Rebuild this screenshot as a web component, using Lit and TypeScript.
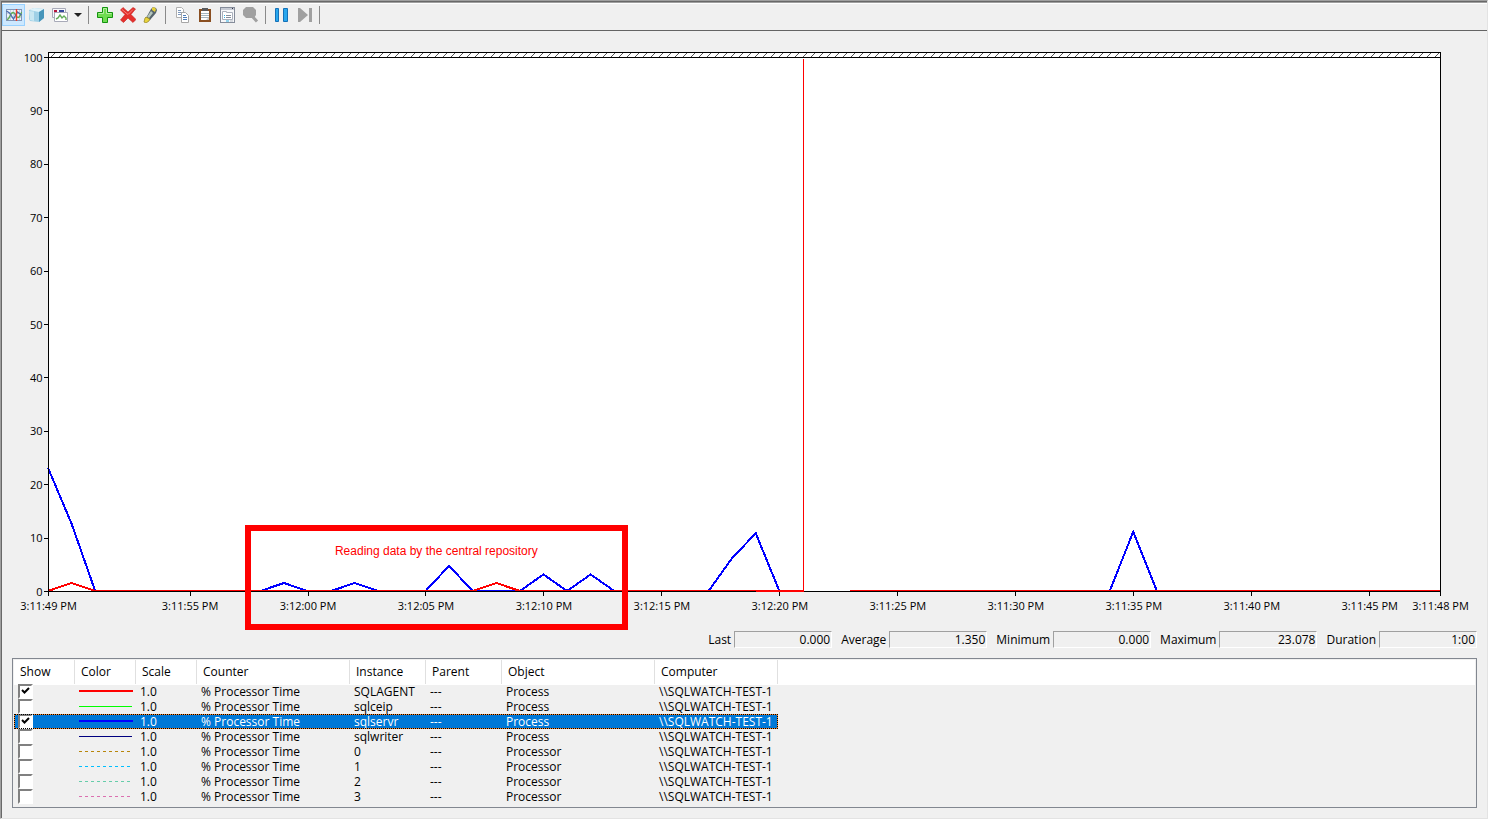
import { LitElement, html, svg, css } from "lit";
import { customElement } from "lit/decorators.js";
import { classMap } from "lit/directives/class-map.js";

const SPAN = 59;
const CURSOR = 32;

interface Counter {
  show: boolean;
  color: string;
  width: number;
  dashed: boolean;
  instance: string;
  object: string;
  selected?: boolean;
}

const counters: Counter[] = [
  { show: true, color: "#ff0000", width: 2, dashed: false, instance: "SQLAGENT", object: "Process" },
  { show: false, color: "#00ff00", width: 1, dashed: false, instance: "sqlceip", object: "Process" },
  { show: true, color: "#0000ff", width: 2, dashed: false, instance: "sqlservr", object: "Process", selected: true },
  { show: false, color: "#000080", width: 1, dashed: false, instance: "sqlwriter", object: "Process" },
  { show: false, color: "#b8860b", width: 1, dashed: true, instance: "0", object: "Processor" },
  { show: false, color: "#00bfff", width: 1, dashed: true, instance: "1", object: "Processor" },
  { show: false, color: "#66cdaa", width: 1, dashed: true, instance: "2", object: "Processor" },
  { show: false, color: "#db70b0", width: 1, dashed: true, instance: "3", object: "Processor" },
];

const timeTicks: [number, string][] = [
  [0, "3:11:49 PM"],
  [6, "3:11:55 PM"],
  [11, "3:12:00 PM"],
  [16, "3:12:05 PM"],
  [21, "3:12:10 PM"],
  [26, "3:12:15 PM"],
  [31, "3:12:20 PM"],
  [36, "3:11:25 PM"],
  [41, "3:11:30 PM"],
  [46, "3:11:35 PM"],
  [51, "3:11:40 PM"],
  [56, "3:11:45 PM"],
  [59, "3:11:48 PM"],
];

const blueRuns = [
  "0,23.078 1,12.6 2,0",
  "9,0 10,1.5 11,0",
  "12,0 13,1.5 14,0",
  "16,0 17,4.7 18,0 20,0 21,3.1 22,0 23,3.1 24,0",
  "28,0 29,6.2 30,10.8 31,0",
  "45,0 46,11.1 47,0",
];
const redRuns = ["0,0 1,1.5 2,0 18,0", "18,0 19,1.5 20,0", "20,0 32,0", "34,0 59,0"];

const toPoints = (run: string) =>
  run
    .split(" ")
    .map((p) => {
      const [x, y] = p.split(",").map(Number);
      return `${x},${100 - y}`;
    })
    .join(" ");

const pct = (index: number) => `${(index / SPAN) * 100}%`;

@customElement("perf-toolbar")
class PerfToolbar extends LitElement {
  static styles = css`
    :host {
      display: flex;
      align-items: center;
      height: 26px;
      padding-bottom: 2px;
      border-bottom: 1px solid #646464;
      box-shadow: inset 0 1px #a0a0a0, inset 0 2px #fff;
    }
    button {
      display: grid;
      place-items: center;
      width: 23px;
      height: 22px;
      padding: 0;
      border: 1px solid transparent;
      background: none;
    }
    .on {
      background: #cce8ff;
      border-color: #99d1ff;
    }
    .drop {
      width: 14px;
    }
    .sep {
      width: 1px;
      height: 18px;
      margin: 0 4px 0 3px;
      background: #8a8a8a;
    }
    svg {
      display: block;
    }
  `;

  private icon(body: unknown) {
    return html`<svg width="17" height="16" viewBox="0 0 17 16" aria-hidden="true">${body}</svg>`;
  }

  render() {
    return html`
      <button class="on" aria-label="View current activity">
        ${this.icon(svg`
          <rect x="1.5" y="2.5" width="15" height="11" fill="#eef4fa" stroke="#8295b8"/>
          <path d="M2 6.500h14M2 10.500h14M5.500 3v10M8.500 3v10M14.500 3v10" stroke="#c4d3e4"/>
          <path d="M2 12.500c3 0 3-7 6-7s2 5 5 5 2-5 4-5" fill="none" stroke="#62ad55" stroke-width="1.5"/>
          <path d="M1.500 4l3 2 4 6 4-7 4 3" fill="none" stroke="#4a6cb0" stroke-width="1.3"/>
          <path d="M11.500 2v12" stroke="#ef3b24" stroke-width="1.4"/>`)}
      </button>
      <button aria-label="View log data">
        ${this.icon(svg`
          <path d="M1 3l5-2 10 1v9l-5 4-9-1-1-2z" fill="#9fd0e6"/>
          <path d="M1 3l5-2 10 1-5 3z" fill="#dff3fa"/>
          <path d="M11 5l5-3v9l-5 4z" fill="#4795ba"/>
          <path d="M1 4l5 .5V14l-4-1z" fill="#c9e7f2"/>`)}
      </button>
      <button aria-label="Change graph type">
        ${this.icon(svg`
          <path d="M1.500 1.500h13v9h-13z" fill="#f7f8fb" stroke="#a8aab8"/>
          <path d="M3 3h3v3H3z" fill="#b8143c"/>
          <path d="M8 4h5" stroke="#33479d" stroke-width="2"/>
          <path d="M3.500 5.500h13v9h-13z" fill="#fff" stroke="#a8aab8"/>
          <path d="M5 12l2-1 2-3 2 3 2-2 2 2v2" fill="none" stroke="#62ac59" stroke-width="1.400"/>`)}
      </button>
      <button class="drop" aria-label="Graph type menu">
        <svg width="8" height="4" viewBox="0 0 8 4"><path d="M0 0h8L4 4z" fill="#222"/></svg>
      </button>
      <span class="sep"></span>
      <button aria-label="Add">
        ${this.icon(svg`
          <path d="M6.500 .5h5v5h5v5h-5v5h-5v-5h-5v-5h5z" fill="#6fdc52" stroke="#13930e"/>
          <path d="M7.500 1.500h3v5h5M2.500 6.500h5v-5" fill="none" stroke="#b4f0a2"/>`)}
      </button>
      <button aria-label="Delete">
        ${this.icon(svg`
          <path d="M1.500 3l2.500-2.500L9 5l5-4.500L16.500 2 12 7.500l5 5-3 3-5-4.500-4.500 4.500-3-2.500L6 7.500z" fill="#e5302c" stroke="#c3201f" stroke-width=".6"/>
          <path d="M3 2.500l6 5 5-5" fill="none" stroke="#f7807a"/>`)}
      </button>
      <button aria-label="Highlight">
        ${this.icon(svg`
          <path d="M9 2l2-2 3 1 1 2-1 3-6 7-4-2z" fill="#56646c"/>
          <path d="M10 1l2-1 2 2-1 3-3-2z" fill="#e6cf38"/>
          <path d="M9 4l2 2-4 5-2-1z" fill="#b4c6bb"/>
          <path d="M4 10l4 2-1 2-3 2-2-1 1-4z" fill="#e8d33c" stroke="#8c7c20" stroke-width=".7"/>`)}
      </button>
      <span class="sep"></span>
      <button aria-label="Copy properties">
        ${this.icon(svg`
          <path d="M3.500 .5h5l2 2v8h-7z" fill="#fff" stroke="#b0b0b0"/>
          <path d="M5 3.500h3M5 5.500h4M5 7.500h3" stroke="#7d98bd"/>
          <path d="M8.500 5.500h4l3 3v7h-7z" fill="#fff" stroke="#a6a6a6"/>
          <path d="M10 8.500h3M10 10.500h4M10 12.500h4" stroke="#4f7db8"/>`)}
      </button>
      <button aria-label="Paste counter list">
        ${this.icon(svg`
          <rect x="4" y="3" width="10" height="11" fill="#fff" stroke="#8a4f21" stroke-width="2"/>
          <path d="M6 1h6v3H6z" fill="#58595c"/>
          <path d="M5 6.500h8M5 8.500h8M5 10.500h8" stroke="#a3b5bf"/>
          <path d="M13 10v3h-3z" fill="#c8c8c8"/>`)}
      </button>
      <button aria-label="Properties">
        ${this.icon(svg`
          <rect x="1.500" y=".5" width="14" height="15" fill="#f7f8fa" stroke="#858c9a"/>
          <path d="M2 2h13" stroke="#c7cbd4" stroke-width="2"/>
          <path d="M13 1.500h1" stroke="#334"/>
          <path d="M3.500 4.500h4v1h6v7h-10z" fill="#fff" stroke="#aab0bc"/>
          <path d="M7 8.500h5M7 10.500h5" stroke="#868e9c"/>
          <path d="M5 8.500h1M5 10.500h1M7 14h3" stroke="#2faee0"/>
          <path d="M11 14h3" stroke="#b6bcc5"/>`)}
      </button>
      <button aria-label="Zoom">
        ${this.icon(svg`
          <path d="M4 0h7l3 3v5l-2 3H4L1 8V3z" fill="#a0a0a0"/>
          <path d="M10 9l5 5.500" stroke="#a0a0a0" stroke-width="3"/>`)}
      </button>
      <span class="sep"></span>
      <button aria-label="Freeze display">
        ${this.icon(svg`
          <path d="M2.500 1.500h3v13h-3zM10.500 1.500h4v13h-4z" fill="#29a7ed" stroke="#1571b8"/>`)}
      </button>
      <button aria-label="Update data">
        ${this.icon(svg`
          <path d="M2 1h2l8 7-8 7H2zM13 1h3v14h-3z" fill="#a0a0a0"/>`)}
      </button>
      <span class="sep"></span>
    `;
  }
}

@customElement("perf-chart")
class PerfChart extends LitElement {
  static styles = css`
    :host {
      display: flex;
      padding: 21px 47px 40px 46px;
      min-height: 0;
    }
    svg {
      display: block;
      overflow: visible;
    }
    .area {
      flex: 1;
      display: flex;
      flex-direction: column;
    }
    .hatch {
      flex: none;
      width: calc(100% + 1px);
      height: 5px;
      overflow: hidden;
    }
    .stage {
      flex: 1;
      display: grid;
      min-height: 0;
      position: relative;
    }
    .stage > svg {
      width: 100%;
      height: 100%;
    }
    text {
      font: 11px/15px "Open Sans", sans-serif;
      fill: #000;
    }
    .axis {
      stroke: #000;
      shape-rendering: crispEdges;
    }
    .cursor {
      stroke: #ff0000;
      shape-rendering: crispEdges;
    }
    .run {
      fill: none;
      stroke-width: 2;
      vector-effect: non-scaling-stroke;
      shape-rendering: crispEdges;
    }
    .blue {
      stroke: #0000ff;
    }
    .red {
      stroke: #ff0000;
    }
    .note {
      position: absolute;
      box-sizing: border-box;
      left: 14.15%;
      width: 27.5%;
      bottom: -39px;
      height: 105px;
      border: 6px solid #ff0000;
      padding-top: 12px;
      text-align: center;
      color: #ff0000;
      font: 12px/17px "Liberation Sans", sans-serif;
    }
  `;

  render() {
    const values = Array.from({ length: 11 }, (_, i) => i * 10);
    return html`
      <div class="area">
        <svg class="hatch" aria-hidden="true">
          <defs>
            <pattern id="hatch" width="8" height="5" patternUnits="userSpaceOnUse">
              <path d="M3 5l4-4" stroke="#555" />
            </pattern>
          </defs>
          <rect width="100%" height="5" fill="#fff" />
          <rect width="100%" height="5" fill="url(#hatch)" />
          <path d="M0 .5h4000M.5 0v5" stroke="#000" />
          <line x1="100%" x2="100%" y2="5" stroke="#000" stroke-width="2" />
        </svg>
        <div class="stage">
          <svg role="img" aria-label="% Processor Time">
            <rect width="100%" height="100%" fill="#fff" />
            <svg x="0" y="0" width="100%" height="100%" viewBox="0 0 ${SPAN} 100" preserveAspectRatio="none">
              ${blueRuns.map((r) => svg`<polyline class="run blue" points=${toPoints(r)}/>`)}
              ${redRuns.map((r) => svg`<polyline class="run red" points=${toPoints(r)}/>`)}
            </svg>
            <g transform="translate(.5 .5)">
              <rect class="axis" width="100%" height="100%" fill="none" />
              ${values.map(
                (v) => svg`
                  <line class="axis" x1="-5" x2="0" y1="${100 - v}%" y2="${100 - v}%"/>
                  <text x="-6" y="${100 - v}%" dy="4" text-anchor="end">${v}</text>`
              )}
              ${timeTicks.map(
                ([i, label]) => svg`
                  <svg y="100%" height="20" overflow="visible">
                    <line class="axis" x1=${pct(i)} x2=${pct(i)} y2="4"/>
                    <text x=${pct(i)} y="18" text-anchor="middle">${label}</text>
                  </svg>`
              )}
              <line class="cursor" x1=${pct(CURSOR)} x2=${pct(CURSOR)} y1="1" y2="100%" />
              <line class="cursor" x1=${pct(30)} x2=${pct(CURSOR)} y1="100%" y2="100%" />
            </g>
          </svg>
          <div class="note">Reading data by the central repository</div>
        </div>
      </div>
    `;
  }
}

@customElement("perf-stats")
class PerfStats extends LitElement {
  static styles = css`
    :host {
      display: flex;
      justify-content: flex-end;
      align-items: center;
      gap: 9px;
      padding: 0 10px 0 0;
      font: 12px/16px "Open Sans", sans-serif;
    }
    .stat {
      display: flex;
      align-items: center;
      gap: 3px;
    }
    output {
      box-sizing: border-box;
      width: 98px;
      height: 17px;
      padding-right: 1px;
      border: 1px solid;
      border-color: #a0a0a0 #fff #fff #a0a0a0;
      text-align: right;
      line-height: 15px;
    }
  `;

  render() {
    const stats = [
      ["Last", "0.000"],
      ["Average", "1.350"],
      ["Minimum", "0.000"],
      ["Maximum", "23.078"],
      ["Duration", "1:00"],
    ];
    return html`${stats.map(
      ([name, value]) => html`<div class="stat">
        <label for=${name}>${name}</label><output id=${name}>${value}</output>
      </div>`
    )}`;
  }
}

@customElement("perf-legend")
class PerfLegend extends LitElement {
  static styles = css`
    :host {
      display: block;
      border: 1px solid #828790;
      padding: 1px;
      font: 12px/15px "Open Sans", sans-serif;
    }
    table {
      table-layout: fixed;
      width: 764px;
      border-collapse: separate;
      border-spacing: 0;
    }
    th {
      box-sizing: border-box;
      height: 24px;
      padding: 0 6px 1px;
      text-align: left;
      font-weight: 400;
      border-right: 1px solid #e0e0e0;
    }
    td {
      height: 15px;
      padding: 0 4px;
      white-space: nowrap;
      line-height: 15px;
    }
    .list {
      background: linear-gradient(#fff 25px, transparent 25px);
      padding-bottom: 2px;
    }
    .c-show { width: 61px; }
    .c-color { width: 61px; }
    .c-scale { width: 61px; }
    .c-counter { width: 153px; }
    .c-instance { width: 76px; }
    .c-parent { width: 76px; }
    .c-object { width: 153px; }
    .c-computer { width: 123px; }
    .selected {
      background: #0078d7;
      color: #fff;
      box-shadow: inset 0 0 0 1px #ff8728;
      outline: 1px dotted #000;
      outline-offset: -1px;
    }
    .tick {
      display: flex;
    }
    input {
      appearance: none;
      box-sizing: border-box;
      width: 15px;
      height: 15px;
      margin: 0;
      border: 2px solid;
      border-color: #808080 #fff #fff #808080;
      background: #fff;
    }
    input:checked {
      background: #fff
        url("data:image/svg+xml,%3Csvg xmlns='http://www.w3.org/2000/svg' width='11' height='11'%3E%3Cpath d='M2 4l2.500 2.500L9 2' fill='none' stroke='%23000' stroke-width='2'/%3E%3C/svg%3E")
        no-repeat;
    }
    svg {
      display: block;
    }
  `;

  render() {
    const cols = ["Show", "Color", "Scale", "Counter", "Instance", "Parent", "Object", "Computer"];
    return html`
      <div class="list">
        <table>
          <colgroup>
            ${cols.map((c) => html`<col class="c-${c.toLowerCase()}" />`)}
          </colgroup>
          <thead>
            <tr>
              ${cols.map((c) => html`<th scope="col">${c}</th>`)}
            </tr>
          </thead>
          <tbody>
            ${counters.map(
              (c) => html`<tr class=${classMap({ selected: !!c.selected })}>
                <td class="tick"><input type="checkbox" aria-label="Show ${c.instance}" .checked=${c.show} /></td>
                <td>
                  <svg width="54" height="15" aria-hidden="true">
                    <path
                      d=${c.width === 2 ? "M0 7h54" : "M0 7.500h53"}
                      stroke=${c.color}
                      stroke-width=${c.width}
                      stroke-dasharray=${c.dashed ? "3 3" : "none"}
                    />
                  </svg>
                </td>
                <td>1.0</td>
                <td>% Processor Time</td>
                <td>${c.instance}</td>
                <td>---</td>
                <td>${c.object}</td>
                <td>\\\\SQLWATCH-TEST-1</td>
              </tr>`
            )}
          </tbody>
        </table>
      </div>
    `;
  }
}

@customElement("app-root")
class AppRoot extends LitElement {
  static styles = css`
    :host {
      display: flex;
      flex-direction: column;
      box-sizing: border-box;
      min-height: 100vh;
      background: #f0f0f0;
      color: #000;
      border: 1px solid;
      border-color: #a0a0a0 #e3e3e3 #e3e3e3 #a0a0a0;
    }
    .frame {
      flex: 1;
      display: flex;
      flex-direction: column;
      border-top: 1px solid #696969;
      border-left: 1px solid #696969;
    }
    perf-chart {
      flex: 1;
    }
    perf-legend {
      margin: 10px;
    }
  `;

  render() {
    return html`
      <div class="frame">
        <perf-toolbar></perf-toolbar>
        <perf-chart></perf-chart>
        <perf-stats></perf-stats>
        <perf-legend></perf-legend>
      </div>
    `;
  }
}
